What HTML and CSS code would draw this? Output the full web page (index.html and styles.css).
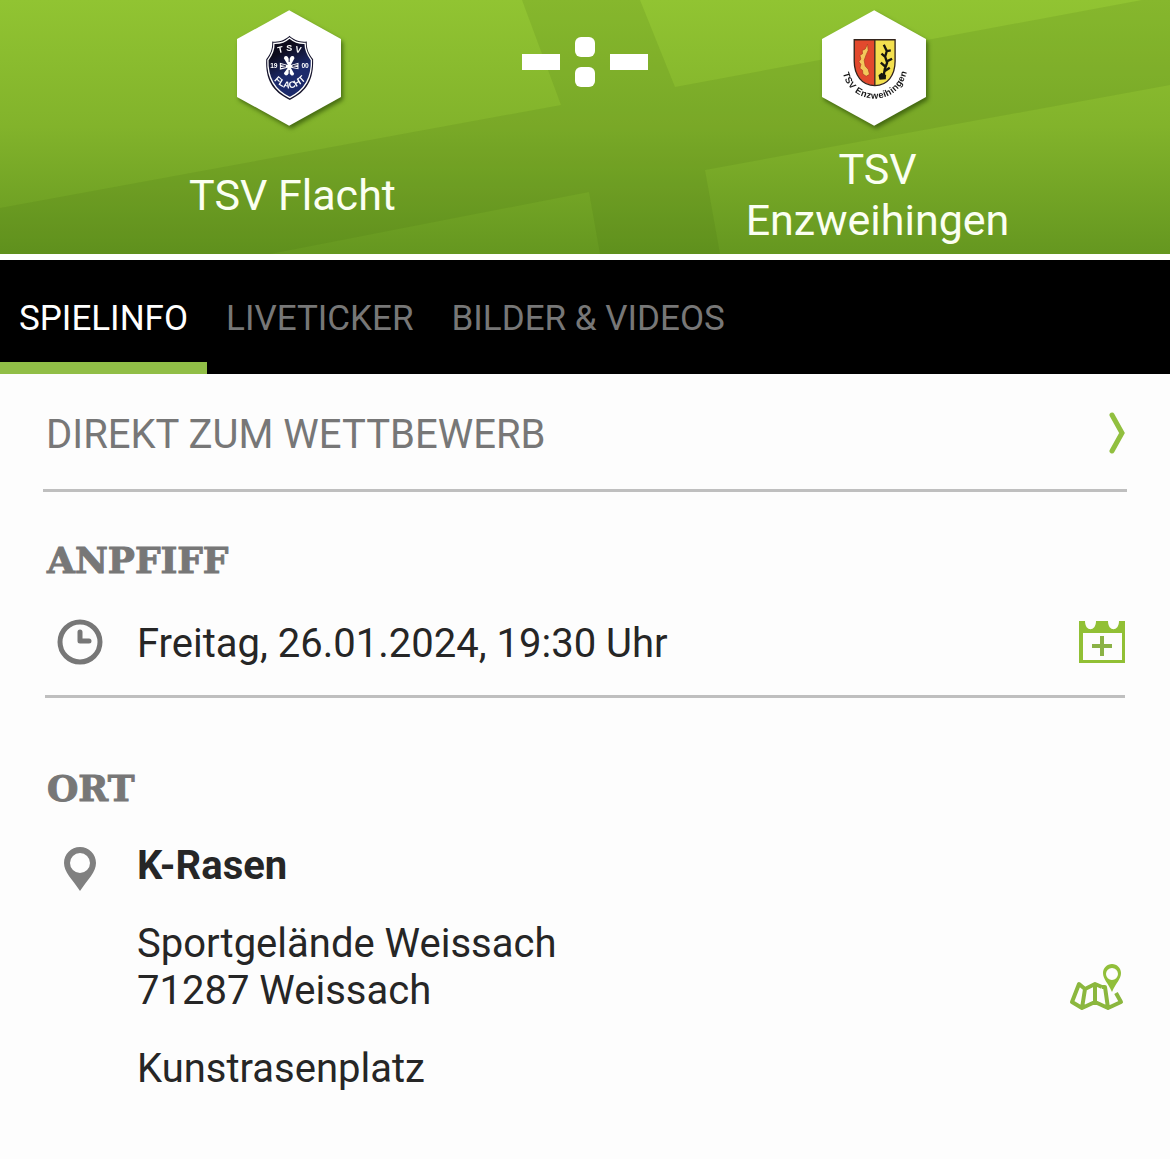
FILE: index.html
```html
<!DOCTYPE html>
<html lang="de">
<head>
<meta charset="utf-8">
<meta name="viewport" content="width=device-width, initial-scale=1">
<title>TSV Flacht – TSV Enzweihingen</title>
<link rel="stylesheet" href="styles.css">
</head>
<body>
<header class="match">
  <svg class="match-pattern" viewBox="0 0 1170 254" preserveAspectRatio="none" aria-hidden="true">
    <path d="M522 0H640L675 87L1142 0H1170V85L705 170L720 254H600L589 192L270 254H0V208L561 105Z"/>
  </svg>
  <div class="team team-home">
    <svg class="crest" viewBox="51 30 313 348" role="img" aria-label="Wappen TSV Flacht">
      <defs>
        <linearGradient id="shield" x1="0" y1="0" x2="0.4" y2="1">
          <stop offset="0.3" stop-color="#0d0b1c"/><stop offset="0.7" stop-color="#1c2a6b"/>
        </linearGradient>
        <path id="flacht-line" d="M160 239Q208 292 260 237"/>
      </defs>
      <path fill="#fff" d="M208 30L364 117V291L208 378L51 291V117Z"/>
      <path fill="#16142c" d="M209 107C220 119 242 127 261 124C260 147 267 161 280 178C282 238 262 276 210 300C158 276 136 238 139 178C152 161 158 147 157 124C177 127 198 119 209 107Z"/>
      <path fill="url(#shield)" stroke="#fff" stroke-width="4" d="M209 114C222 125 239 131 256 130C256 151 263 164 275 180C277 234 257 270 210 293C162 270 142 234 144 180C156 164 163 151 162 130C180 131 197 125 209 114Z"/>
      <g fill="#fff" font-family="Liberation Sans, Arial, sans-serif" font-weight="bold" text-anchor="middle">
        <text x="183" y="158" font-size="27" transform="rotate(-12 183 158)">T</text>
        <text x="208" y="152" font-size="27">S</text>
        <text x="234" y="158" font-size="27" transform="rotate(12 234 158)">V</text>
        <text x="162" y="203" font-size="20">19</text>
        <text x="256" y="203" font-size="20">00</text>
        <text font-size="28"><textPath href="#flacht-line" startOffset="50%">FLACHT</textPath></text>
      </g>
      <path fill="#fff" d="M204 195L192 175Q194 165 202 169L208 177L214 169Q223 165 224 175L213 195L236 188V208L213 203L223 221Q220 230 213 225L208 218L203 225Q195 229 192 220L204 203L180 209V188Z"/>
      <path stroke="#1a1c44" stroke-width="3" d="M208 174V186M208 210V220M183 194L198 197M183 203L198 200M233 194L218 197M233 203L218 200"/>
    </svg>
    <h2 class="team-name">TSV Flacht</h2>
  </div>
  <div class="score" role="img" aria-label="Noch kein Ergebnis">
    <span class="dash"></span>
    <span class="colon"><span class="dot"></span><span class="dot"></span></span>
    <span class="dash"></span>
  </div>
  <div class="team team-away">
    <svg class="crest" viewBox="51 30 313 348" role="img" aria-label="Wappen TSV Enzweihingen">
      <defs><path id="enz-line" d="M121 217C143 313 288 318 302 196"/></defs>
      <path fill="#fff" d="M208 30L364 117V291L208 378L51 291V117Z"/>
      <path fill="#e2492d" d="M148 119H210V257C171 254 148 225 148 184Z"/>
      <path fill="#f4e04e" d="M210 119H271V184C271 225 249 254 210 257Z"/>
      <path fill="none" stroke="#33241c" stroke-width="4" d="M148 119H271V184C271 225 249 257 210 257S148 225 148 184ZM210 119V257"/>
      <path fill="#f3c95b" stroke="#a93b20" stroke-width="2" d="M188 132L181 147L172 151L173 161L165 166L168 177L162 185L168 193L165 205L173 211L174 222L184 229L194 223L190 208L181 198L178 181L184 164L190 151Z"/>
      <path fill="none" stroke="#17160f" stroke-width="7" d="M237 134L246 153L241 170L247 188L240 207L236 230M246 153L258 151M242 171L230 161M246 184L262 176M243 201L228 188M240 213L255 203"/>
      <path fill="#17160f" d="M221 226L230 218L244 225L243 238L224 239Z"/>
      <text fill="#161616" font-family="Liberation Sans, Arial, sans-serif" font-size="28" font-weight="bold" dy="8"><textPath href="#enz-line">TSV Enzweihingen</textPath></text>
    </svg>
    <h2 class="team-name">TSV Enzweihingen</h2>
  </div>
</header>

<nav class="tabs">
  <a class="tab tab-active" href="#spielinfo" aria-current="page">SPIELINFO</a>
  <a class="tab" href="#liveticker">LIVETICKER</a>
  <a class="tab" href="#medien">BILDER &amp; VIDEOS</a>
</nav>

<main class="content" id="spielinfo">
  <a class="competition" href="#wettbewerb">
    <span class="competition-label">DIREKT ZUM WETTBEWERB</span>
    <svg width="16" height="42" viewBox="0 0 16 42" aria-hidden="true"><path fill="none" stroke="#91bf3f" stroke-width="5" stroke-linecap="round" d="M3 3L13 21L3 39"/></svg>
  </a>

  <section class="block kickoff">
    <h3 class="block-title">ANPFIFF</h3>
    <div class="row">
      <svg class="row-icon" width="46" height="46" viewBox="0 0 46 46" aria-hidden="true"><g fill="none" stroke="#777"><circle cx="23" cy="23" r="20" stroke-width="5"/><path stroke-width="5" stroke-linecap="round" stroke-linejoin="round" d="M23 13V22H32"/></g></svg>
      <p class="text">Freitag, 26.01.2024, 19:30 Uhr</p>
      <button class="action" type="button" aria-label="Zum Kalender hinzufügen">
        <svg width="46" height="42" viewBox="0 0 46 42"><path fill="#91c035" fill-rule="evenodd" d="M0 0H6C6 11 17 11 17 0H29C29 11 40 11 40 0H46V42H0ZM4 12V39H43V12Z"/><path fill="none" stroke="#8bb246" stroke-width="4" d="M23 15V35M13 25H33"/></svg>
      </button>
    </div>
  </section>

  <section class="block venue">
    <h3 class="block-title">ORT</h3>
    <div class="row">
      <svg class="row-icon" width="46" height="46" viewBox="0 0 46 46" aria-hidden="true"><path fill="#808080" fill-rule="evenodd" d="M23 1C14 1 7 8 7 17C7 26 15 33 23 45C31 33 39 26 39 17C39 8 32 1 23 1ZM23 7A10 10 0 1 1 23 27A10 10 0 1 1 23 7Z"/></svg>
      <p class="text text-strong">K-Rasen</p>
      <address class="text address">Sportgelände Weissach<br>71287 Weissach</address>
      <button class="action action-map" type="button" aria-label="Karte anzeigen">
        <svg width="56" height="50" viewBox="0 0 56 50"><path fill="none" stroke="#8bb73e" stroke-width="4" stroke-linejoin="round" d="M33 23L26 20L16 25L10 20L3 38L13 44L26 38L39 44L52 38L47 29M16 25L13 44M26 20V38M33 23H36L39 44"/><path fill="#91bf3a" fill-rule="evenodd" d="M43 0C38 0 34 4 34 9C34 15 39 19 43 28C47 19 52 15 52 9C52 4 48 0 43 0ZM43 4A6 6 0 1 1 43 16A6 6 0 1 1 43 4Z"/></svg>
      </button>
      <p class="text surface">Kunstrasenplatz</p>
    </div>
  </section>
</main>
</body>
</html>
```
FILE: styles.css
```css
* {
  box-sizing: border-box;
}

body {
  margin: 0;
  background: #fdfdfd;
  color: #262626;
  font-family: Roboto, sans-serif;
}

h2,
h3,
p {
  margin: 0;
}

.match {
  position: relative;
  display: grid;
  grid-template-columns: 1fr 1fr;
  padding: 10px 0 8px;
  background: linear-gradient(#91c432, #82b32b 50%, #659720);
}

.match-pattern {
  position: absolute;
  inset: 0;
  width: 100%;
  height: 100%;
  fill: #40680c;
  fill-opacity: 0.13;
}

.team {
  position: relative;
  grid-row: 1;
  display: flex;
  flex-direction: column;
  align-items: center;
  padding-right: 8px;
}

.team-home {
  grid-column: 1;
}

.team-away {
  grid-column: 2;
}

.crest {
  width: 104px;
  height: 116px;
  overflow: visible;
  filter: drop-shadow(2px 3px 2px rgb(30 60 0 / 60%));
}

.team-name {
  flex: 1;
  display: flex;
  align-items: center;
  max-width: 280px;
  margin: 18px 0 0 8px;
  color: #fbfff2;
  font-size: 43px;
  font-weight: 400;
  line-height: 51px;
  text-align: center;
}

.score {
  position: relative;
  grid-row: 1;
  grid-column: 1 / -1;
  justify-self: center;
  align-self: start;
  display: flex;
  align-items: center;
  gap: 15px;
  margin-top: 27px;
}

.dash {
  width: 38px;
  height: 16px;
  background: #fff;
}

.colon {
  display: grid;
  gap: 10px;
}

.dot {
  width: 20px;
  height: 20px;
  border-radius: 6px;
  background: #fff;
}

.tabs {
  display: flex;
  height: 120px;
  border-top: 6px solid #fff;
  background: #000;
}

.tab {
  display: flex;
  align-items: center;
  padding: 14px 19px 0;
  border-bottom: 12px solid transparent;
  color: #777;
  font-size: 35px;
  text-decoration: none;
  white-space: nowrap;
}

.tab-active {
  border-color: #91be47;
  color: #fff;
}

.content {
  padding: 0 43px 48px;
}

.competition {
  display: flex;
  align-items: center;
  justify-content: space-between;
  height: 118px;
  padding: 3px 2px 0 3px;
  border-bottom: 3px solid #bfbfbf;
  color: #777;
  font-size: 40px;
  line-height: 44px;
  text-decoration: none;
}

.competition-label {
  padding-top: 4px;
}

.block {
  margin: 0 2px;
}

.kickoff {
  padding: 44px 0 28px;
  border-bottom: 3px solid #bfbfbf;
}

.venue {
  padding-top: 66px;
}

.block-title {
  padding-left: 2px;
  color: #777;
  font-family: "DejaVu Serif", serif;
  font-size: 36px;
  font-weight: 700;
  line-height: 48px;
  -webkit-text-stroke: 1px #777;
}

.row {
  display: grid;
  grid-template-columns: 92px 1fr auto;
  align-items: center;
  margin-top: 32px;
}

.venue .row {
  margin-top: 30px;
}

.row-icon {
  margin-left: 12px;
}

.text {
  font-size: 40px;
  font-style: normal;
  line-height: 47px;
}

.kickoff .text {
  padding-top: 4px;
}

.text-strong {
  padding-bottom: 6px;
  font-weight: 700;
}

.address {
  grid-column: 2;
  margin-top: 25px;
}

.surface {
  grid-column: 2;
  margin-top: 31px;
}

.action {
  display: grid;
  padding: 0;
  border: 0;
  background: none;
}

.action-map {
  align-self: end;
}
```
